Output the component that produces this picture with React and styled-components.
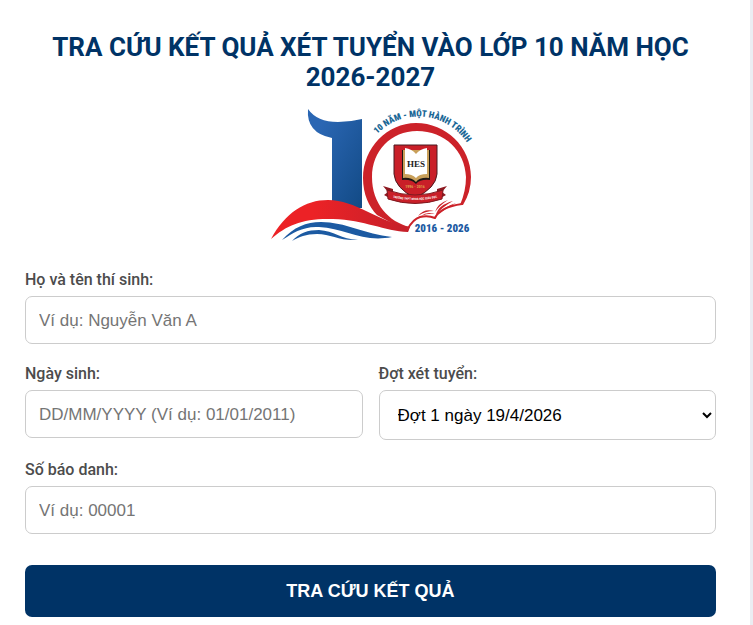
import React from "react";
import styled, { createGlobalStyle } from "styled-components";

const GlobalStyle = createGlobalStyle`
  *, *::before, *::after { box-sizing: border-box; }
  html { background: #ebedf2; }
  body { margin: 0; font-family: Roboto, "Liberation Sans", sans-serif; }
`;

const Page = styled.div`
  min-height: 100vh;
  padding-right: 3px;
  display: flex;
`;

const Card = styled.main`
  flex: 1;
  min-width: 0;
  padding: 32px 34px 8px 25px;
  background: #fff;
`;

const Title = styled.h1`
  margin: 0;
  color: #003366;
  font-size: 26px;
  line-height: 30px;
  font-weight: 700;
  text-align: center;
  text-transform: uppercase;
`;

const LogoBox = styled.div`
  display: flex;
  justify-content: center;
  margin: 12px 0 26px;
`;

const LogoDrawing = styled.svg`
  width: 210px;
  height: 140px;
  font-family: "Liberation Sans Narrow", "Roboto Condensed", Roboto, sans-serif;
  font-weight: 700;
`;

const Form = styled.form`
  display: flex;
  flex-direction: column;
  gap: 20px;
`;

const FieldRow = styled.div`
  display: grid;
  grid-template-columns: 1fr 1fr;
  gap: 16px;
  align-items: start;
`;

const Field = styled.div`
  display: flex;
  flex-direction: column;
  gap: 6px;
`;

const Label = styled.label`
  color: #4c4c4c;
  font-size: 16px;
  line-height: 20px;
  font-weight: 500;
`;

const Input = styled.input`
  width: 100%;
  height: 48px;
  padding: 2px 13px 0;
  border: 1px solid #ccc;
  border-radius: 7px;
  background: #fff;
  font: 17px "Liberation Sans", Arial, sans-serif;
  &::placeholder { color: #757575; }
`;

const Select = styled.select`
  width: 100%;
  height: 50px;
  padding: 0 2px 0 14px;
  border: 1px solid #ccc;
  border-radius: 7px;
  background: #fff;
  color: #000;
  font: 17px "Liberation Sans", Arial, sans-serif;
`;

const Submit = styled.button`
  width: 100%;
  height: 52px;
  margin-top: 11px;
  border: 0;
  border-radius: 7px;
  background: #003366;
  color: #fff;
  font: bold 18px "Liberation Sans", Arial, sans-serif;
  text-transform: uppercase;
`;

function Logo() {
  return (
    <LogoDrawing viewBox="266 104 210 140" role="img" aria-label="HES 10 năm">
      <defs>
        <linearGradient id="one" x1="0" y1="0" x2="1" y2="1">
          <stop offset="0.2" stopColor="#2a66b3" />
          <stop offset="1" stopColor="#124a85" />
        </linearGradient>
        <linearGradient id="wave" x1="0" y1="0" x2="1" y2="0">
          <stop offset="0.3" stopColor="#ec2226" />
          <stop offset="1" stopColor="#c4202a" />
        </linearGradient>
        <path id="arc" d="M377 134 A58 58 0 0 1 470 148" />
        <path id="band" d="M386 196 Q415 204 444 196" />
      </defs>
      <path fill="url(#one)" d="M308 109 Q317 122 338 122 Q350 122 362 119 V208 H332 V138 Q306 133 308 109Z" />
      <path fill="#cc2229" fillRule="evenodd" d="M416 123 C387 123 363 148 363 178 C363 194 369 207 377 215 L408 232 L410 227 C389 222 372 204 372 177 C372 151 391 131 417 131 C445 131 465 151 466 177 Q466 191 460 205 L463 205 Q471 192 471 177 C471 147 446 123 416 123Z" />
      <path fill="url(#wave)" d="M271 239 C285 213 305 200 328 200 C356 200 376 221 409 227 L408 232 C384 231 365 220 333 219 C303 218 287 225 271 239Z" />
      <path fill="#1c5aa2" d="M282 240 C294 227 306 222 321 222 C345 222 365 234 392 237 C362 243 345 228 319 227 C303 226 293 233 282 240Z" />
      <path fill="#1c5aa2" d="M292 241 C299 233 308 230 319 230 C334 231 341 239 358 240 C339 241 331 234 317 234 C306 234 299 237 292 241Z" />
      <path fill="none" stroke="#cc2229" strokeWidth="2" strokeLinejoin="round" d="M407 230 Q413 219 420 217 Q428 215 435 218 Q440 207 462 204" />
      <path fill="#cc2229" d="M418 216 Q424 208 434 211 Q425 211 418 216Z M421 216 Q427 211 435 214 Q428 213 421 216Z M436 215 Q438 205 453 201 Q442 207 436 215Z M435 212 Q438 203 448 200 Q440 205 435 212Z M438 215 Q443 207 456 203 Q445 209 438 215Z" />
      <path fill="#c91f28" stroke="#4b1b20" d="M394 145 H437 V174 Q436 188 415 198 Q395 188 394 174Z" />
      <path fill="#1d1714" d="M402 150 H430 V180 Q420 179 416 184 Q411 179 402 180Z" />
      <path fill="#c9a05a" d="M403 150 H429 V178 Q420 177 416 182 Q411 177 403 178Z" />
      <path fill="#fff" d="M405 148 Q412 149 416 154 Q420 149 427 148 V174 Q419 174 416 178 Q412 174 405 174Z" />
      <text x="416" y="167" textAnchor="middle" fontSize="9" fontFamily="Liberation Serif, serif" fill="#222">HES</text>
      <text x="415" y="188" textAnchor="middle" fontSize="4" fill="#dfa24b">1996 - 2016</text>
      <path fill="#8e1820" d="M383 186 L393 189 V200 L384 195 L388 192Z M447 186 L437 189 V200 L446 195 L442 192Z" />
      <path fill="#c91f28" stroke="#7d1a20" strokeWidth="1" d="M387 190 Q415 200 443 190 L442 199 Q415 208 388 199Z" />
      <text fontSize="3" fill="#fff"><textPath href="#band" startOffset="50%" textAnchor="middle">TRƯỜNG THPT KHOA HỌC GIÁO DỤC</textPath></text>
      <text fontSize="9" fontWeight="900" fill="#1a6796"><textPath href="#arc">10 NĂM - MỘT HÀNH TRÌNH</textPath></text>
      <text x="442" y="232" textAnchor="middle" fontSize="11" fontWeight="900" fill="#1c5aa2">2016 - 2026</text>
    </LogoDrawing>
  );
}

export default function App() {
  return (
    <>
      <GlobalStyle />
      <Page>
        <Card>
          <Title>Tra cứu kết quả xét tuyển vào lớp 10 năm học 2026-2027</Title>
          <LogoBox><Logo /></LogoBox>
          <Form onSubmit={(event) => event.preventDefault()}>
            <Field>
              <Label htmlFor="fullname">Họ và tên thí sinh:</Label>
              <Input id="fullname" type="text" placeholder="Ví dụ: Nguyễn Văn A" />
            </Field>
            <FieldRow>
              <Field>
                <Label htmlFor="birthdate">Ngày sinh:</Label>
                <Input id="birthdate" type="text" placeholder="DD/MM/YYYY (Ví dụ: 01/01/2011)" />
              </Field>
              <Field>
                <Label htmlFor="round">Đợt xét tuyển:</Label>
                <Select id="round" defaultValue="1">
                  <option value="1">Đợt 1 ngày 19/4/2026</option>
                </Select>
              </Field>
            </FieldRow>
            <Field>
              <Label htmlFor="candidate">Số báo danh:</Label>
              <Input id="candidate" type="text" placeholder="Ví dụ: 00001" />
            </Field>
            <Submit type="submit">Tra cứu kết quả</Submit>
          </Form>
        </Card>
      </Page>
    </>
  );
}
